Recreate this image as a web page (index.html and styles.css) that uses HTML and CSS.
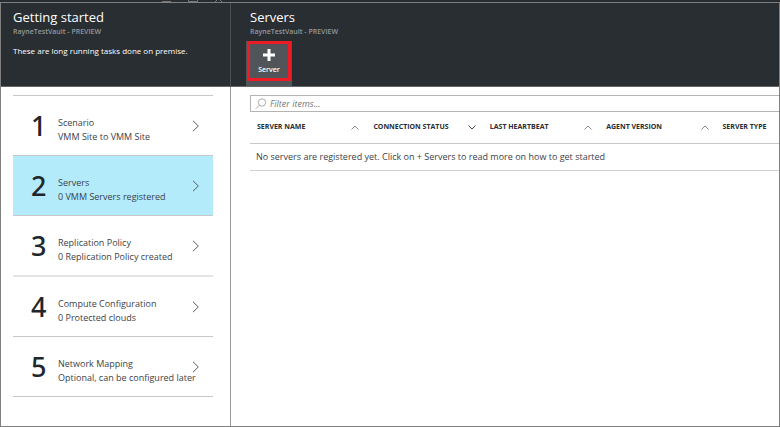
FILE: index.html
```html
<!DOCTYPE html>
<html lang="en">
<head>
<meta charset="utf-8">
<meta name="viewport" content="width=device-width, initial-scale=1">
<title>Getting started - Servers</title>
<link rel="stylesheet" href="styles.css">
</head>
<body>
<svg class="sprites" aria-hidden="true">
  <symbol id="next" viewBox="0 0 8 12"><path d="M1 .8 6.3 6 1 11.2"/></symbol>
  <symbol id="up" viewBox="0 0 8 5"><path d="M.5 4.5 4 1l3.5 3.5"/></symbol>
  <symbol id="down" viewBox="0 0 8 5"><path d="M.5.5 4 4 7.5.5"/></symbol>
</svg>
<div class="window-bar">
  <svg class="window-icons" viewBox="0 0 62 2" aria-hidden="true"><path d="M0 1.5h9M26.5 0v1.5h9V0M53 2l2-2M60 2l-2-2"/></svg>
</div>
<div class="blades">
  <section class="blade steps-blade">
    <header class="blade-header">
      <h1>Getting started</h1>
      <p class="subtitle">RayneTestVault - PREVIEW</p>
      <p class="note">These are long running tasks done on premise.</p>
    </header>
    <ol class="steps">
      <li><a class="step" href="#scenario"><span class="number">1</span><span class="step-text"><span>Scenario</span><span>VMM Site to VMM Site</span></span><svg class="next"><use href="#next"/></svg></a></li>
      <li><a class="step selected" href="#servers"><span class="number">2</span><span class="step-text"><span>Servers</span><span>0 VMM Servers registered</span></span><svg class="next"><use href="#next"/></svg></a></li>
      <li><a class="step soft-rule" href="#policy"><span class="number">3</span><span class="step-text"><span>Replication Policy</span><span>0 Replication Policy created</span></span><svg class="next"><use href="#next"/></svg></a></li>
      <li><a class="step" href="#compute"><span class="number">4</span><span class="step-text"><span>Compute Configuration</span><span>0 Protected clouds</span></span><svg class="next"><use href="#next"/></svg></a></li>
      <li><a class="step" href="#network"><span class="number">5</span><span class="step-text"><span>Network Mapping</span><span>Optional, can be configured later</span></span><svg class="next"><use href="#next"/></svg></a></li>
    </ol>
  </section>
  <section class="blade servers-blade" id="servers">
    <header class="blade-header">
      <h2>Servers</h2>
      <p class="subtitle">RayneTestVault - PREVIEW</p>
      <div class="toolbar">
        <button class="command" type="button">
          <svg class="plus" viewBox="0 0 12 12" aria-hidden="true"><path d="M6 0v12M0 6h12"/></svg>
          <span>Server</span>
        </button>
      </div>
    </header>
    <div class="content">
      <div class="filter">
        <svg class="search" viewBox="0 0 12 12" aria-hidden="true"><circle cx="7" cy="4.5" r="3.7"/><path d="M4.3 7.2.8 10.8"/></svg>
        <input type="text" placeholder="Filter items..." aria-label="Filter items">
      </div>
      <table>
        <thead>
          <tr>
            <th><span class="heading">SERVER NAME<svg class="sort"><use href="#up"/></svg></span></th>
            <th><span class="heading">CONNECTION STATUS<svg class="sort active"><use href="#down"/></svg></span></th>
            <th><span class="heading">LAST HEARTBEAT<svg class="sort"><use href="#up"/></svg></span></th>
            <th><span class="heading">AGENT VERSION<svg class="sort"><use href="#up"/></svg></span></th>
            <th class="last"><span class="heading">SERVER TYPE</span></th>
          </tr>
        </thead>
        <tbody>
          <tr><td colspan="5">No servers are registered yet. Click on + Servers to read more on how to get started</td></tr>
        </tbody>
      </table>
    </div>
  </section>
</div>
</body>
</html>
```
FILE: styles.css
```css
* { box-sizing: border-box; }

body {
  margin: 0;
  min-height: 100vh;
  display: flex;
  flex-direction: column;
  background: #fff;
  color: #3c4248;
  font: 9px/14px "Open Sans", "Noto Sans", sans-serif;
}

h1, h2, p, ol { margin: 0; padding: 0; }
ol { list-style: none; }
svg { flex: none; fill: none; stroke: #555b61; }
.sprites { position: absolute; width: 0; height: 0; }

.window-bar {
  height: 2px;
  padding-left: 162px;
  background: #272c30;
}

.window-icons { display: block; width: 62px; height: 2px; stroke: #777; }

.blades {
  flex: 1;
  display: flex;
  border: 1px solid #808080;
}

.steps-blade {
  flex: 0 0 230px;
  min-width: 0;
  border-right: 1px solid #999;
}

.servers-blade { flex: 1; min-width: 0; }

.blade-header {
  height: 84px;
  padding: 5px 12px 0;
  background: #292e32;
  border-bottom: 1px solid #65686b;
  color: #fff;
}

.steps-blade .blade-header {
  margin-right: -1px;
  border-right: 1px solid #4b4f53;
}

.servers-blade .blade-header {
  display: flex;
  flex-direction: column;
  padding-left: 15px;
}

h1, h2 {
  font-size: 13px;
  font-weight: 400;
  line-height: 18px;
}

.subtitle {
  color: #95989a;
  font-size: 7px;
  font-weight: 600;
  line-height: 12px;
}

.note {
  margin-top: 6px;
  font-size: 8px;
  font-weight: 400;
  line-height: 14px;
  white-space: nowrap;
}

.servers-blade h2, .servers-blade .subtitle { padding-left: 4px; }

.toolbar { margin-top: auto; }

.command {
  display: flex;
  flex-direction: column;
  align-items: center;
  width: 46px;
  height: 45px;
  padding: 8px 0 0;
  border: 0;
  background: #515559;
  color: #fff;
  font: 600 7px/10px "Open Sans", "Noto Sans", sans-serif;
  position: relative;
}

.command::after {
  content: "";
  position: absolute;
  inset: 0 1px 5px 1px;
  border: 3px solid #ed1c24;
}

.plus { width: 12px; height: 12px; margin-bottom: 4px; stroke: #fff; stroke-width: 3; }

.steps {
  margin: 8px 17px 0 12px;
  border-top: 1px solid #c8c8c8;
}

.step {
  display: flex;
  align-items: center;
  height: 60px;
  border-bottom: 1px solid #c8c8c8;
  color: inherit;
  text-decoration: none;
}

.selected { background: #b3ebfb; }
.soft-rule { height: 61px; border-bottom: 2px solid #e4e4e4; }

.number {
  flex: none;
  width: 45px;
  padding-left: 18px;
  color: #20262b;
  font-family: "Noto Sans", "Open Sans", sans-serif;
  font-size: 27px;
  font-weight: 500;
  line-height: 40px;
}

.step-text {
  flex: 1;
  min-width: 0;
  display: flex;
  flex-direction: column;
  padding-top: 8px;
  white-space: nowrap;
}

.next { width: 8px; height: 12px; margin-right: 13px; }

.content { padding: 8px 0 0 19px; }

.filter {
  display: flex;
  align-items: center;
  height: 17px;
  padding-left: 4px;
  border: 1px solid #b4b4b4;
  border-right: 0;
}

.search { width: 12px; height: 12px; stroke: #aaa; }

.filter input {
  flex: 1;
  min-width: 0;
  height: 15px;
  padding: 0 3px;
  border: 0;
  outline: 0;
  background: none;
  font: italic 9px/15px "Open Sans", "Noto Sans", sans-serif;
}

.filter input::placeholder { color: #777; opacity: 1; }

table {
  width: 100%;
  border-collapse: collapse;
  table-layout: fixed;
}

th {
  width: 22%;
  height: 31px;
  padding: 0 7px;
  border-bottom: 1px solid #c8c8c8;
  color: #272d33;
  font-size: 7px;
  font-weight: 700;
  text-align: left;
  white-space: nowrap;
}

.last { width: 12%; }

.heading {
  display: flex;
  align-items: center;
  justify-content: space-between;
}

.sort { width: 8px; height: 5px; stroke: #888; }
.active { stroke: #444; }

td {
  height: 27px;
  padding: 0 6px;
  border-bottom: 1px solid #d0d0d0;
}
```
